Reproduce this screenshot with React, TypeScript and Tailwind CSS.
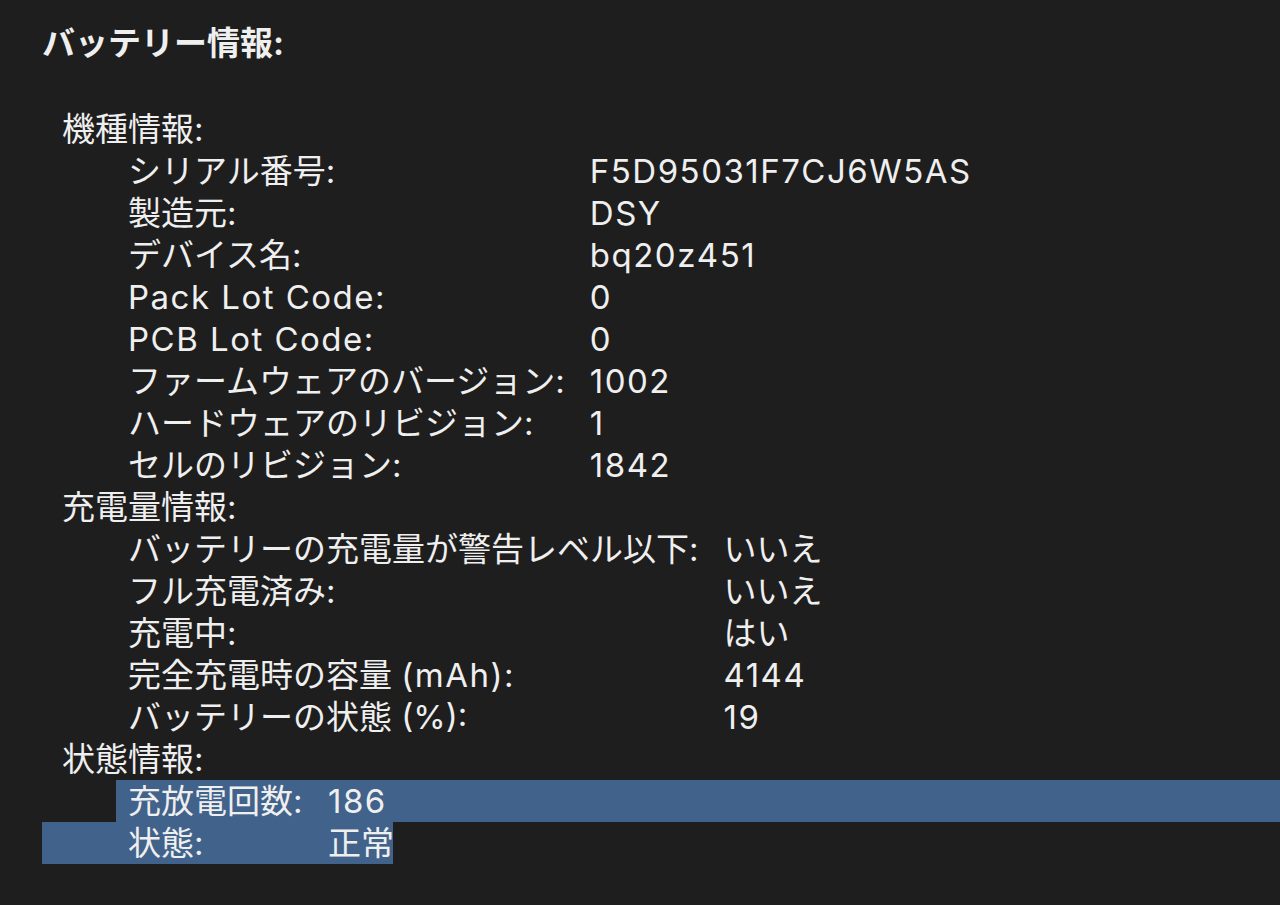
import React from "react";

const font = { fontFamily: '"Inter", "Noto Sans CJK JP", sans-serif' };

type Row = [string, string];

const model: Row[] = [
  ["シリアル番号:", "F5D95031F7CJ6W5AS"],
  ["製造元:", "DSY"],
  ["デバイス名:", "bq20z451"],
  ["Pack Lot Code:", "0"],
  ["PCB Lot Code:", "0"],
  ["ファームウェアのバージョン:", "1002"],
  ["ハードウェアのリビジョン:", "1"],
  ["セルのリビジョン:", "1842"],
];

const charge: Row[] = [
  ["バッテリーの充電量が警告レベル以下:", "いいえ"],
  ["フル充電済み:", "いいえ"],
  ["充電中:", "はい"],
  ["完全充電時の容量 (mAh):", "4144"],
  ["バッテリーの状態 (%):", "19"],
];

function T({ s }: { s: string }) {
  const parts = s.split(/([A-Za-z0-9()%]+(?: [A-Za-z0-9()%]+)*)/);
  return (
    <>
      {parts.map((p, i) =>
        /[A-Za-z0-9]/.test(p) ? (
          <span key={i} className="tracking-[0.045em]">
            {p}
          </span>
        ) : (
          <span key={i}>{p}</span>
        )
      )}
    </>
  );
}

function Section({ title, rows }: { title: string; rows: Row[] }) {
  return (
    <div>
      <div className="h-[42px] leading-[42px] pl-[20px]">{title}</div>
      <div className="grid grid-cols-[auto_1fr] gap-x-[25px] pl-[86px]">
        {rows.map(([k, v]) => (
          <React.Fragment key={k}>
            <div className="h-[42px] leading-[42px] whitespace-nowrap">
              <T s={k} />
            </div>
            <div className="h-[42px] leading-[42px] whitespace-nowrap">
              <T s={v} />
            </div>
          </React.Fragment>
        ))}
      </div>
    </div>
  );
}

export default function App() {
  return (
    <div
      className="w-[1280px] h-[905px] bg-[#1e1e1e] text-[#efefef] text-[33px] overflow-hidden pt-[22px]"
      style={font}
    >
      <div className="pl-[42px] h-[42px] leading-[42px] font-bold">バッテリー情報:</div>
      <div className="h-[44px]" />
      <div className="pl-[42px]">
        <Section title="機種情報:" rows={model} />
        <Section title="充電量情報:" rows={charge} />
        <div className="h-[42px] leading-[42px] pl-[20px]">状態情報:</div>
      </div>
      <div className="flex h-[42px] leading-[42px] whitespace-nowrap">
        <div className="w-[116px] shrink-0" />
        <div className="flex-1 bg-[#41628a] pl-[12px] flex">
          <span className="w-[200px] shrink-0">充放電回数:</span>
          <span className="tracking-[0.045em]">186</span>
        </div>
      </div>
      <div className="flex h-[42px] leading-[42px] whitespace-nowrap">
        <div className="w-[42px] shrink-0" />
        <div className="w-[351px] shrink-0 bg-[#41628a] pl-[86px] flex">
          <span className="w-[200px] shrink-0">状態:</span>
          <span className="shrink-0">正常</span>
        </div>
      </div>
    </div>
  );
}
